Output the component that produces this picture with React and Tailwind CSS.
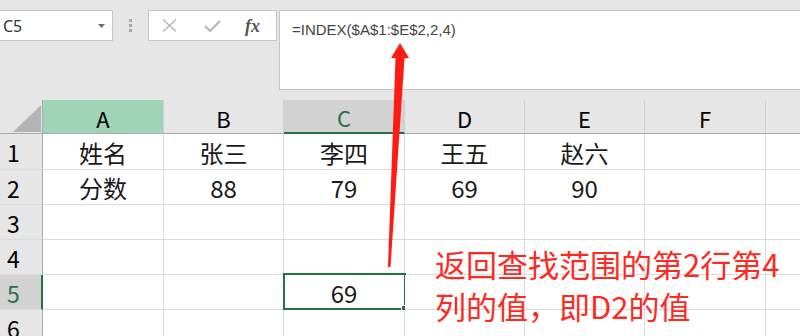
import React from "react";

const FONT = { fontFamily: '"Noto Sans CJK SC", "Noto Sans", sans-serif' };

const cols = [
  { key: "A", w: "w-[121px]" },
  { key: "B", w: "w-[120px]" },
  { key: "C", w: "w-[121px]" },
  { key: "D", w: "w-[120px]" },
  { key: "E", w: "w-[120px]" },
  { key: "F", w: "w-[121px]" },
];

const data = {
  1: ["姓名", "张三", "李四", "王五", "赵六", ""],
  2: ["分数", "88", "79", "69", "90", ""],
  3: ["", "", "", "", "", ""],
  4: ["", "", "", "", "", ""],
  5: ["", "", "69", "", "", ""],
  6: ["", "", "", "", "", ""],
};

const rowH = {
  1: "h-[36px]",
  2: "h-[35px]",
  3: "h-[35px]",
  4: "h-[35px]",
  5: "h-[35px]",
  6: "h-[35px]",
};

function HeaderRow() {
  return (
    <div className="flex h-[34px]">
      <div className="relative w-[43px] shrink-0 border-r border-b border-[#ababab] bg-[#e6e6e6]">
        <svg className="absolute left-[13px] top-[5px]" width="28" height="27" viewBox="0 0 28 27">
          <polygon points="28,0 28,27 0,27" fill="#b4b4b4" />
        </svg>
      </div>
      {cols.map((c) => {
        let cls = "bg-[#e6e6e6] border-b border-[#ababab] text-black";
        if (c.key === "A") cls = "bg-[#9fd5b7] border-b border-[#ababab] text-black";
        if (c.key === "C") cls = "bg-[#d2d2d2] border-b-2 border-b-[#217346] text-[#217346]";
        return (
          <div
            key={c.key}
            className={`${c.w} shrink-0 flex items-center justify-center border-r border-r-[#d0d0d0] text-[22px] leading-none ${cls}`}
            style={FONT}
          >
            <span className="pt-[2px]">{c.key}</span>
          </div>
        );
      })}
      <div className="flex-1 bg-[#e6e6e6] border-b border-[#ababab]" />
    </div>
  );
}

function DataRow({ n }) {
  const sel = n === 5;
  return (
    <div className={`flex ${rowH[n]}`}>
      <div
        className={`w-[43px] shrink-0 flex items-center pl-[7px] text-[23px] leading-none border-b border-b-[#dadada] ${
          sel
            ? "bg-[#d2d2d2] text-[#217346] border-r-2 border-r-[#217346]"
            : "bg-[#e6e6e6] text-black border-r border-r-[#ababab]"
        }`}
        style={FONT}
      >
        <span className="pt-[2px]">{n}</span>
      </div>
      {cols.map((c, i) => (
        <div
          key={c.key}
          className={`${c.w} shrink-0 relative flex items-center justify-center bg-white border-r border-b border-[#dadada] text-[24px] leading-none text-[#1a1a1a]`}
          style={FONT}
        >
          <span className="pt-[2px]">{data[n][i]}</span>
          {sel && c.key === "C" && (
            <div className="absolute -left-px top-[-2px] w-[123px] h-[37px] border-2 border-[#217346]">
              <div className="absolute right-[-4px] bottom-[-4px] w-[6px] h-[6px] bg-[#217346] outline outline-1 outline-white" />
            </div>
          )}
        </div>
      ))}
      <div className="flex-1 bg-white border-b border-[#dadada]" />
    </div>
  );
}

export default function App() {
  return (
    <div className="relative w-[800px] h-[336px] overflow-hidden bg-[#e6e6e6]" style={FONT}>
      {/* formula bar area */}
      <div className="flex items-start h-[100px] pt-[10px]">
        <div className="-ml-px w-[114px] h-[31px] bg-white border border-[#c6c6c6] flex items-center justify-between pl-[3px] pr-[7px]">
          <span className="text-[16px] text-[#333] leading-none" style={{ fontFamily: '"Noto Sans", sans-serif' }}>C5</span>
          <svg width="7" height="4" viewBox="0 0 7 4">
            <polygon points="0,0 7,0 3.5,4" fill="#6b6b6b" />
          </svg>
        </div>
        <div className="w-[35px] h-[31px] flex flex-col items-center justify-center gap-[2px]">
          <div className="w-[3px] h-[3px] bg-[#a8a8a8]" />
          <div className="w-[3px] h-[3px] bg-[#a8a8a8]" />
          <div className="w-[3px] h-[3px] bg-[#a8a8a8]" />
        </div>
        <div className="w-[129px] h-[31px] bg-white border border-[#c6c6c6] flex items-center">
          <svg className="ml-[13px]" width="15" height="13" viewBox="0 0 15 13">
            <path d="M1 0.5 L14 12.5 M14 0.5 L1 12.5" stroke="#b5b5b5" strokeWidth="1.3" fill="none" />
          </svg>
          <svg className="ml-[27px]" width="17" height="12" viewBox="0 0 17 12">
            <path d="M1 6 L6 11 L16 1" stroke="#b5b5b5" strokeWidth="2" fill="none" />
          </svg>
          <span
            className="ml-[24px] text-[18px] italic font-bold text-[#555] leading-none"
            style={{ fontFamily: '"Liberation Serif", serif' }}
          >
            fx
          </span>
        </div>
        <div className="ml-[2px] flex-1 h-[80px] bg-white border border-[#c6c6c6] border-r-0 pl-[12px] pt-[5px]">
          <span className="text-[15px] text-[#444]" style={{ fontFamily: '"Liberation Sans", sans-serif' }}>
            =INDEX($A$1:$E$2,2,4)
          </span>
        </div>
      </div>

      {/* grid */}
      <div className="flex flex-col">
        <HeaderRow />
        {[1, 2, 3, 4, 5, 6].map((n) => (
          <DataRow key={n} n={n} />
        ))}
      </div>

      {/* annotation arrow */}
      <svg className="absolute left-0 top-0 pointer-events-none" width="800" height="336" viewBox="0 0 800 336">
        <polygon
          points="400,43 409,58 404.5,58 390.5,267 388,267 395.5,58 391,58"
          fill="#ff1a14"
        />
      </svg>

      {/* annotation text */}
      <div
        className="absolute left-[435px] top-[243px] text-[31px] leading-[42px] text-[#ff2a1f]"
        style={FONT}
      >
        <div>返回查找范围的第2行第4</div>
        <div>列的值，即D2的值</div>
      </div>
    </div>
  );
}
